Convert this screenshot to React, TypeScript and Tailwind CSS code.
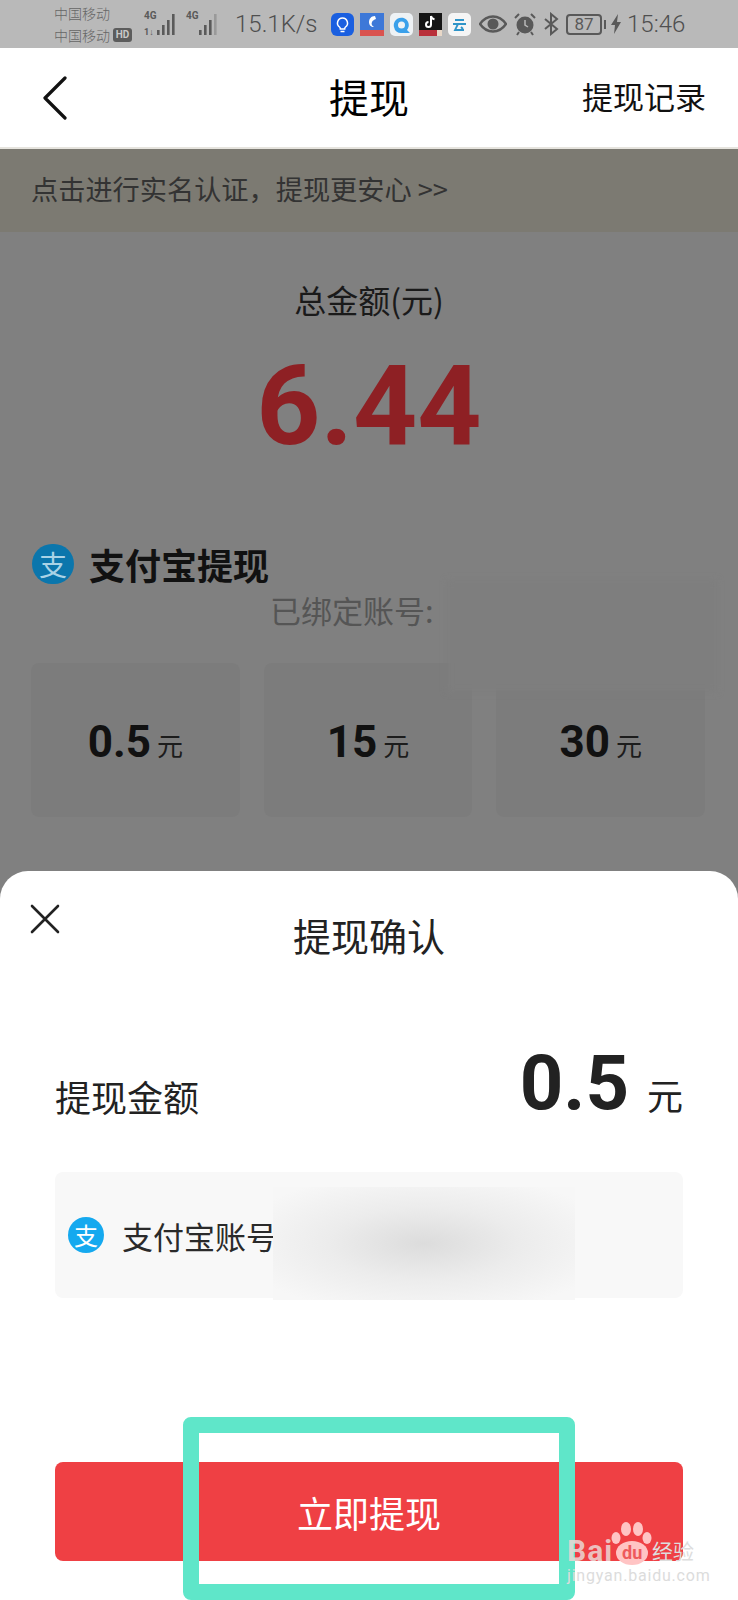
const cjk = "font-['Noto_Sans_CJK_SC','Noto_Sans',sans-serif]"
const num = "font-['Roboto','Noto_Sans_CJK_SC',sans-serif]"

function Signal({ top, bottom }: { top: string; bottom?: boolean }) {
  const bars = [
    { x: 14, y: 21, h: 5, c: "#5a5a5a" },
    { x: 19, y: 16, h: 10, c: "#5a5a5a" },
    { x: 24, y: 11, h: 15, c: "#5a5a5a" },
    { x: 29, y: 5, h: 21, c: top === "a" ? "#5a5a5a" : "#9a9a9a" },
  ]
  return (
    <svg width="35" height="30" viewBox="0 0 35 30" className="shrink-0">
      <text x="1" y="10" fontSize="10" fontWeight="700" fill="#5a5a5a" fontFamily="Roboto">4G</text>
      {bottom && <text x="1" y="26" fontSize="9" fontWeight="700" fill="#5a5a5a" fontFamily="Roboto">1↓</text>}
      {bars.map(b => <rect key={b.x} x={b.x} y={b.y} width="2.6" height={b.h} fill={b.c} />)}
    </svg>
  )
}

function AppIcons() {
  return (
    <div className="flex items-center gap-[6px] shrink-0">
      <svg width="23" height="23" viewBox="0 0 23 23">
        <rect width="23" height="23" rx="6" fill="#1a5fe0" />
        <path d="M11.5 5a5 5 0 0 0-3 9c.7.6.8 1.2.8 2h4.400c0-.8.1-1.400.8-2a5 5 0 0 0-3-9zM9.500 18.500h4" fill="none" stroke="#fff" strokeWidth="1.500" />
      </svg>
      <svg width="24" height="23" viewBox="0 0 24 23">
        <rect width="24" height="23" fill="#3d78d8" />
        <rect y="17" width="24" height="6" fill="#d9534f" />
        <path d="M15 3c-4 0-6 3-6 6s2 5 5 5c-2-1-3-3-2-5s2-2 4-3z" fill="#fff" />
      </svg>
      <svg width="23" height="23" viewBox="0 0 23 23">
        <rect width="23" height="23" rx="5" fill="#eef2f5" />
        <path d="M4 14a7.500 7.500 0 1 1 13 3l3 3h-8a7 7 0 0 1-8-6z" fill="#3aa0ea" />
        <circle cx="11.500" cy="12" r="3.500" fill="#eef2f5" />
      </svg>
      <svg width="23" height="23" viewBox="0 0 23 23">
        <rect width="23" height="23" fill="#151515" />
        <rect y="17" width="18" height="6" fill="#b9303a" />
        <rect x="18" y="17" width="5" height="6" fill="#e8d8c8" />
        <path d="M12 3v8.500a2.500 2.500 0 1 1-2.500-2.500M12 3c.4 2 1.600 3 3.500 3.300" fill="none" stroke="#fff" strokeWidth="2" />
      </svg>
      <svg width="23" height="23" viewBox="0 0 23 23">
        <rect width="23" height="23" rx="5" fill="#f5f5f5" />
        <path d="M7 7h9M5 11h13M10 11l-3 6h9M13 14l2 2" fill="none" stroke="#2f94c8" strokeWidth="1.800" />
      </svg>
    </div>
  )
}

function SystemIcons() {
  return (
    <div className="flex items-center shrink-0">
      <svg width="28" height="20" viewBox="0 0 28 20" className="ml-[8px]">
        <path d="M1 10c3.500-5 8-7.500 13-7.500S23.500 5 27 10c-3.500 5-8 7.500-13 7.500S4.500 15 1 10z" fill="none" stroke="#595959" strokeWidth="2.400" />
        <circle cx="14" cy="10" r="5.500" fill="#595959" />
      </svg>
      <svg width="24" height="24" viewBox="0 0 24 24" className="ml-[6px]">
        <circle cx="12" cy="13" r="8.500" fill="#595959" />
        <path d="M12 8v5l3 2" fill="none" stroke="#b8b8b8" strokeWidth="1.500" />
        <path d="M2 6l4-4M22 6l-4-4M6 20l-2 3M18 20l2 3" stroke="#595959" strokeWidth="2" />
      </svg>
      <svg width="17" height="24" viewBox="0 0 17 24" className="ml-[6px]">
        <path d="M2 7l12 10-6 5V2l6 5L2 17" fill="none" stroke="#595959" strokeWidth="2" />
      </svg>
      <div className="ml-[6px] flex items-center">
        <div className={`${num} w-[36px] h-[21px] border-2 border-[#595959] rounded-[4px] flex items-center justify-center text-[17px] leading-none text-[#595959]`}>87</div>
        <div className="ml-[2px] w-[2px] h-[9px] bg-[#595959]" />
      </div>
      <svg width="10" height="20" viewBox="0 0 10 20" className="ml-[5px]">
        <path d="M7 0L0 11h4l-1 9 7-12H6z" fill="#595959" />
      </svg>
      <span className={`${num} ml-[6px] text-[24px] leading-none text-[#4f4f4f] font-light`}>15:46</span>
    </div>
  )
}

function StatusBar() {
  return (
    <div className="h-12 bg-[#b9b9b9] flex items-center pl-[54px] shrink-0">
      <div className={`${cjk} w-[89px] shrink-0 text-[14px] leading-[22px] text-[#666] font-light`}>
        <div>中国移动</div>
        <div className="flex items-center">
          中国移动
          <span className={`${num} ml-[3px] w-[19px] h-[14px] rounded-[3px] bg-[#5c5c5c] text-[#c8c8c8] text-[10px] font-bold leading-[14px] text-center`}>HD</span>
        </div>
      </div>
      <Signal top="a" bottom />
      <div className="w-[7px]" />
      <Signal top="b" />
      <span className={`${num} ml-[15px] mr-[15px] w-[81px] text-[24px] leading-none text-[#4f4f4f] font-light whitespace-nowrap`}>15.1K/s</span>
      <AppIcons />
      <SystemIcons />
    </div>
  )
}

function Header() {
  return (
    <div className={`${cjk} h-[101px] bg-white border-b-2 border-[#e6e4de] flex items-center justify-between pl-[42px] pr-8 relative shrink-0`}>
      <svg width="26" height="44" viewBox="0 0 26 44">
        <path d="M23 2L3 22l20 20" fill="none" stroke="#111" strokeWidth="3.200" strokeLinecap="round" strokeLinejoin="round" />
      </svg>
      <h1 className="absolute left-0 right-0 text-center text-[40px] leading-none font-normal text-[#000] mb-[4px]">提现</h1>
      <span className="text-[31px] leading-none text-[#111] mb-[4px]">提现记录</span>
    </div>
  )
}

function AlipayIcon({ size, bg, mark }: { size: string; bg: string; mark: string }) {
  return (
    <div className={`${size} ${bg} ${mark} ${cjk} rounded-full flex items-center justify-center shrink-0`}>支</div>
  )
}

function Amount({ value }: { value: string }) {
  return (
    <div className="h-[154px] rounded-[8px] bg-[#7c7c7c] flex items-center justify-center gap-[6px] text-[#111] pt-[4px]">
      <span className={`${num} text-[44px] leading-none font-bold`}>{value}</span>
      <span className={`${cjk} text-[26px] leading-none mt-[5px] text-[#1c1c1c]`}>元</span>
    </div>
  )
}

function PageBehind() {
  return (
    <div className="relative h-[639px] shrink-0 overflow-hidden">
      <div className={`${cjk} text-[32px] leading-10 text-center text-[#1a1a1a] mt-[47px]`}>总金额(元)</div>
      <div className={`${num} text-[112px] leading-[110px] font-bold text-center text-[#8e2024] mt-[32px]`}>6.44</div>
      <div className="flex items-center mt-[83px] pl-8 gap-[15px]">
        <AlipayIcon size="w-[42px] h-10" bg="bg-[#0b76ac]" mark="text-[#a9d3e6] text-[28px] leading-none" />
        <span className={`${cjk} text-[36px] leading-10 font-bold text-[#111]`}>支付宝提现</span>
      </div>
      <div className={`${cjk} text-[31px] leading-10 text-[#555] mt-[6px] ml-[270px]`}>已绑定账号:</div>
      <div className="grid grid-cols-3 gap-6 pl-[31px] pr-[33px] mt-[33px]">
        <Amount value="0.5" />
        <Amount value="15" />
        <Amount value="30" />
      </div>
      {/* blurred account patch over the cards */}
      <div className="absolute left-[447px] top-[348px] w-[270px] h-[112px] bg-[#7e7e7e] blur-[3px]" />
    </div>
  )
}

function ConfirmSheet() {
  return (
    <div className={`${cjk} relative flex-1 bg-white rounded-t-[28px] flex flex-col px-[55px]`}>
      <svg width="30" height="30" viewBox="0 0 30 30" className="absolute left-[30px] top-[33px]">
        <path d="M2 2l26 26M28 2L2 28" stroke="#222" strokeWidth="2.600" strokeLinecap="round" />
      </svg>
      <div className="text-[38px] leading-[50px] text-center text-[#222] mt-[39px]">提现确认</div>
      <div className="flex items-end justify-between mt-[88px]">
        <span className="text-[36px] leading-[50px] text-[#222]">提现金额</span>
        <div className="flex items-end">
          <span className={`${num} text-[76px] leading-[70px] font-bold text-[#222] mb-[3px]`}>0.5</span>
          <span className="text-[36px] leading-[50px] text-[#222] ml-[18px] mb-[2px]">元</span>
        </div>
      </div>
      <div className="relative h-[126px] mt-[51px] rounded-[8px] bg-[#f8f8f8] flex items-center pl-[13px] gap-[18px]">
        <AlipayIcon size="w-9 h-9" bg="bg-[#15a9ef]" mark="text-white text-[24px] leading-none" />
        <span className="text-[31px] leading-none text-[#2a2a2a] whitespace-nowrap">支付宝账号</span>
        <div className="absolute left-[218px] top-[15px] w-[302px] h-[113px] bg-[radial-gradient(ellipse_at_center,#dcdcdc_0%,#ececec_45%,#f7f7f7_90%)]" />
      </div>
      <button className="h-[99px] mt-[164px] rounded-[8px] bg-[#ef4044] text-white text-[36px] leading-none">立即提现</button>
    </div>
  )
}

function Watermark() {
  return (
    <div className="absolute left-[566px] top-[1518px] w-[140px] h-[70px] pointer-events-none">
      <svg width="46" height="44" viewBox="0 0 46 44" className="absolute left-[44px] top-[4px]">
        <ellipse cx="16" cy="7" rx="5" ry="7" fill="#ffc4c4" />
        <ellipse cx="28" cy="7" rx="5" ry="7" fill="#ffc4c4" />
        <ellipse cx="6" cy="16" rx="4.500" ry="6" fill="#ffc4c4" />
        <ellipse cx="37" cy="16" rx="4.500" ry="6" fill="#ffc4c4" />
        <ellipse cx="22" cy="31" rx="16" ry="12" fill="#ffc4c4" />
      </svg>
      <div className={`${num} absolute left-[1px] top-[18px] text-[30px] leading-none font-bold tracking-[1px] text-[#ebd8d6]/85`}>Bai</div>
      <div className={`${num} absolute left-[56px] top-[26px] text-[18px] leading-none font-bold text-[#ee5a5c]`}>du</div>
      <div className={`${cjk} absolute left-[86px] top-[22px] text-[21px] leading-none text-[#ddd] whitespace-nowrap`}>经验</div>
      <div className={`${num} absolute left-[1px] top-[50px] text-[16px] leading-none text-[#dcdcdc] tracking-[0.8px] whitespace-nowrap`}>jingyan.baidu.com</div>
    </div>
  )
}

export default function App() {
  return (
    <div className="relative w-[738px] h-[1600px] bg-[#808080] overflow-hidden flex flex-col">
      <StatusBar />
      <Header />
      <div className={`${cjk} h-[83px] bg-[#7c7a72] flex items-center pl-[31px] pb-[4px] text-[27.2px] leading-none text-[#333] shrink-0`}>点击进行实名认证，提现更安心 &gt;&gt;</div>
      <PageBehind />
      <ConfirmSheet />
      {/* green annotation frame drawn over the screenshot */}
      <div className="absolute left-[183px] top-[1417px] w-[392px] h-[183px] border-[16px] border-[#5fe6c9] rounded-[8px] pointer-events-none" />
      <Watermark />
    </div>
  )
}
